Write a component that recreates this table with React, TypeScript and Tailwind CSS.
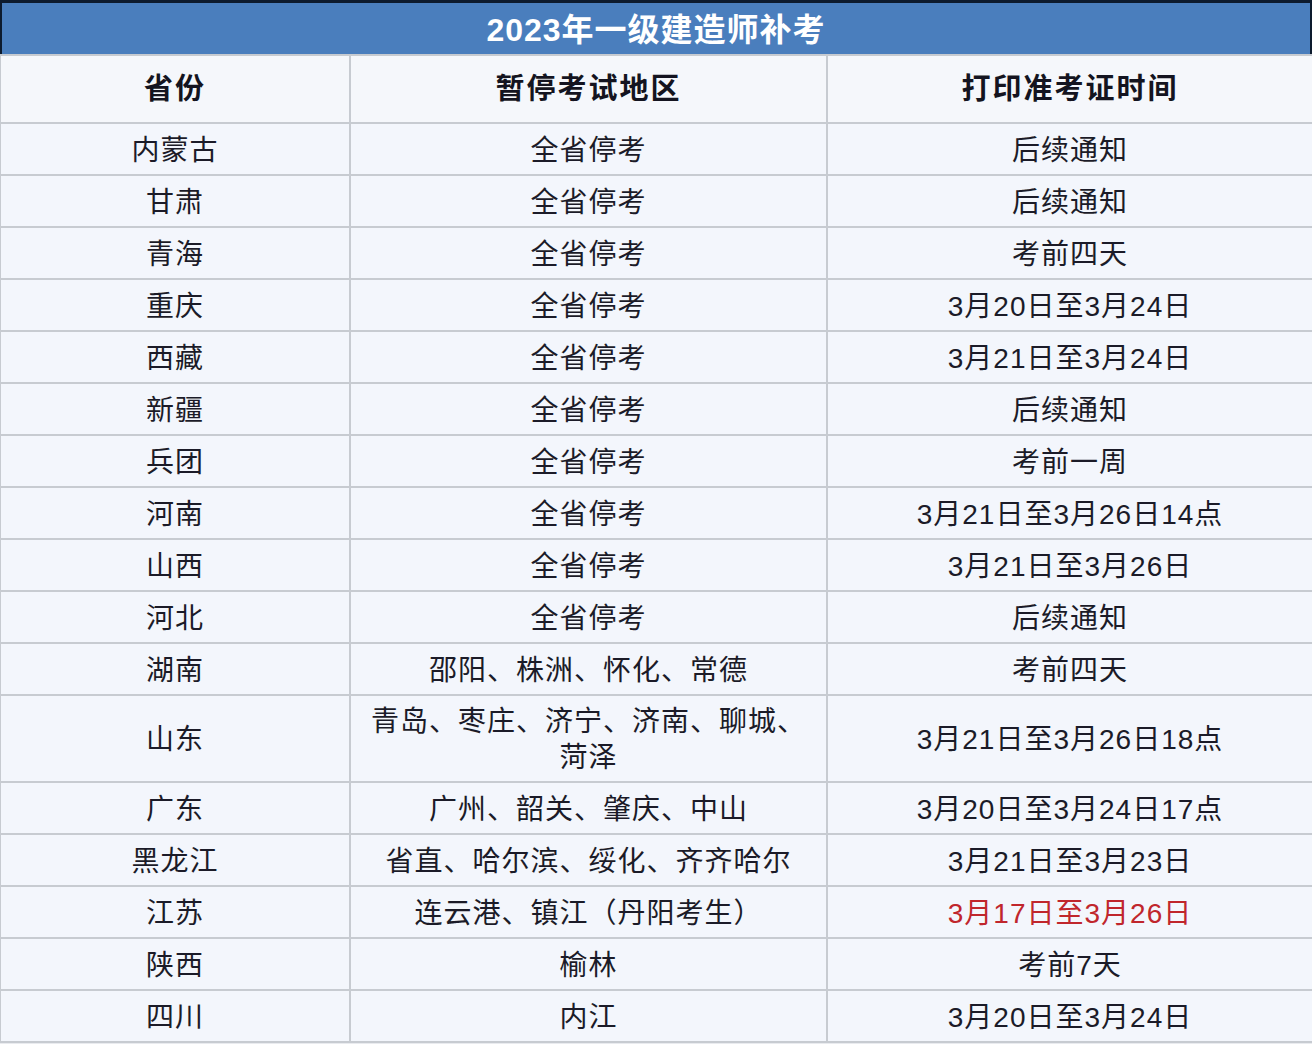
const rows: { p: string; area: React.ReactNode; time: string; red?: boolean; tall?: boolean }[] = [
  { p: "内蒙古", area: "全省停考", time: "后续通知" },
  { p: "甘肃", area: "全省停考", time: "后续通知" },
  { p: "青海", area: "全省停考", time: "考前四天" },
  { p: "重庆", area: "全省停考", time: "3月20日至3月24日" },
  { p: "西藏", area: "全省停考", time: "3月21日至3月24日" },
  { p: "新疆", area: "全省停考", time: "后续通知" },
  { p: "兵团", area: "全省停考", time: "考前一周" },
  { p: "河南", area: "全省停考", time: "3月21日至3月26日14点" },
  { p: "山西", area: "全省停考", time: "3月21日至3月26日" },
  { p: "河北", area: "全省停考", time: "后续通知" },
  { p: "湖南", area: "邵阳、株洲、怀化、常德", time: "考前四天" },
  {
    p: "山东",
    area: (
      <>
        青岛、枣庄、济宁、济南、聊城、
        <br />
        菏泽
      </>
    ),
    time: "3月21日至3月26日18点",
    tall: true,
  },
  { p: "广东", area: "广州、韶关、肇庆、中山", time: "3月20日至3月24日17点" },
  { p: "黑龙江", area: "省直、哈尔滨、绥化、齐齐哈尔", time: "3月21日至3月23日" },
  { p: "江苏", area: "连云港、镇江（丹阳考生）", time: "3月17日至3月26日", red: true },
  { p: "陕西", area: "榆林", time: "考前7天" },
  { p: "四川", area: "内江", time: "3月20日至3月24日" },
]

const font = { fontFamily: '"Liberation Sans", "Noto Sans CJK SC", sans-serif' }

export default function App() {
  return (
    <div className="w-[1312px] h-[1044px] bg-[#e9ebef] overflow-hidden" style={font}>
      <div className="h-[54px] bg-[#4a7ebd] border-t-[3px] border-x-[2px] border-[#0d1b2e] flex items-center justify-center pt-[2px]">
        <span className="text-white text-[32px] font-bold tracking-[1px]">2023年一级建造师补考</span>
      </div>
      <div className="grid grid-cols-[348px_475px_1fr] gap-[2px] bg-[#c7cbd1] pt-[2px] pb-[2px] pl-[1px]">
        {["省份", "暂停考试地区", "打印准考证时间"].map((h) => (
          <div key={h} className="h-[66px] bg-[#f5f7fb] flex items-center justify-center pt-[2px] text-[29px] font-bold tracking-[2px] text-[#141420]">
            {h}
          </div>
        ))}
        {rows.map((r) => {
          const cell = `${r.tall ? "h-[85px]" : "h-[50px]"} bg-[#f3f6fc] flex items-center justify-center pt-[3px] text-center text-[28px] tracking-[1px] text-[#1b1b28] leading-[36px]`
          return [
            <div key={r.p + "1"} className={cell}>{r.p}</div>,
            <div key={r.p + "2"} className={cell}>{r.area}</div>,
            <div key={r.p + "3"} className={`${cell} ${r.red ? "!text-[#c0262c]" : ""}`}>{r.time}</div>,
          ]
        })}
      </div>
    </div>
  )
}
